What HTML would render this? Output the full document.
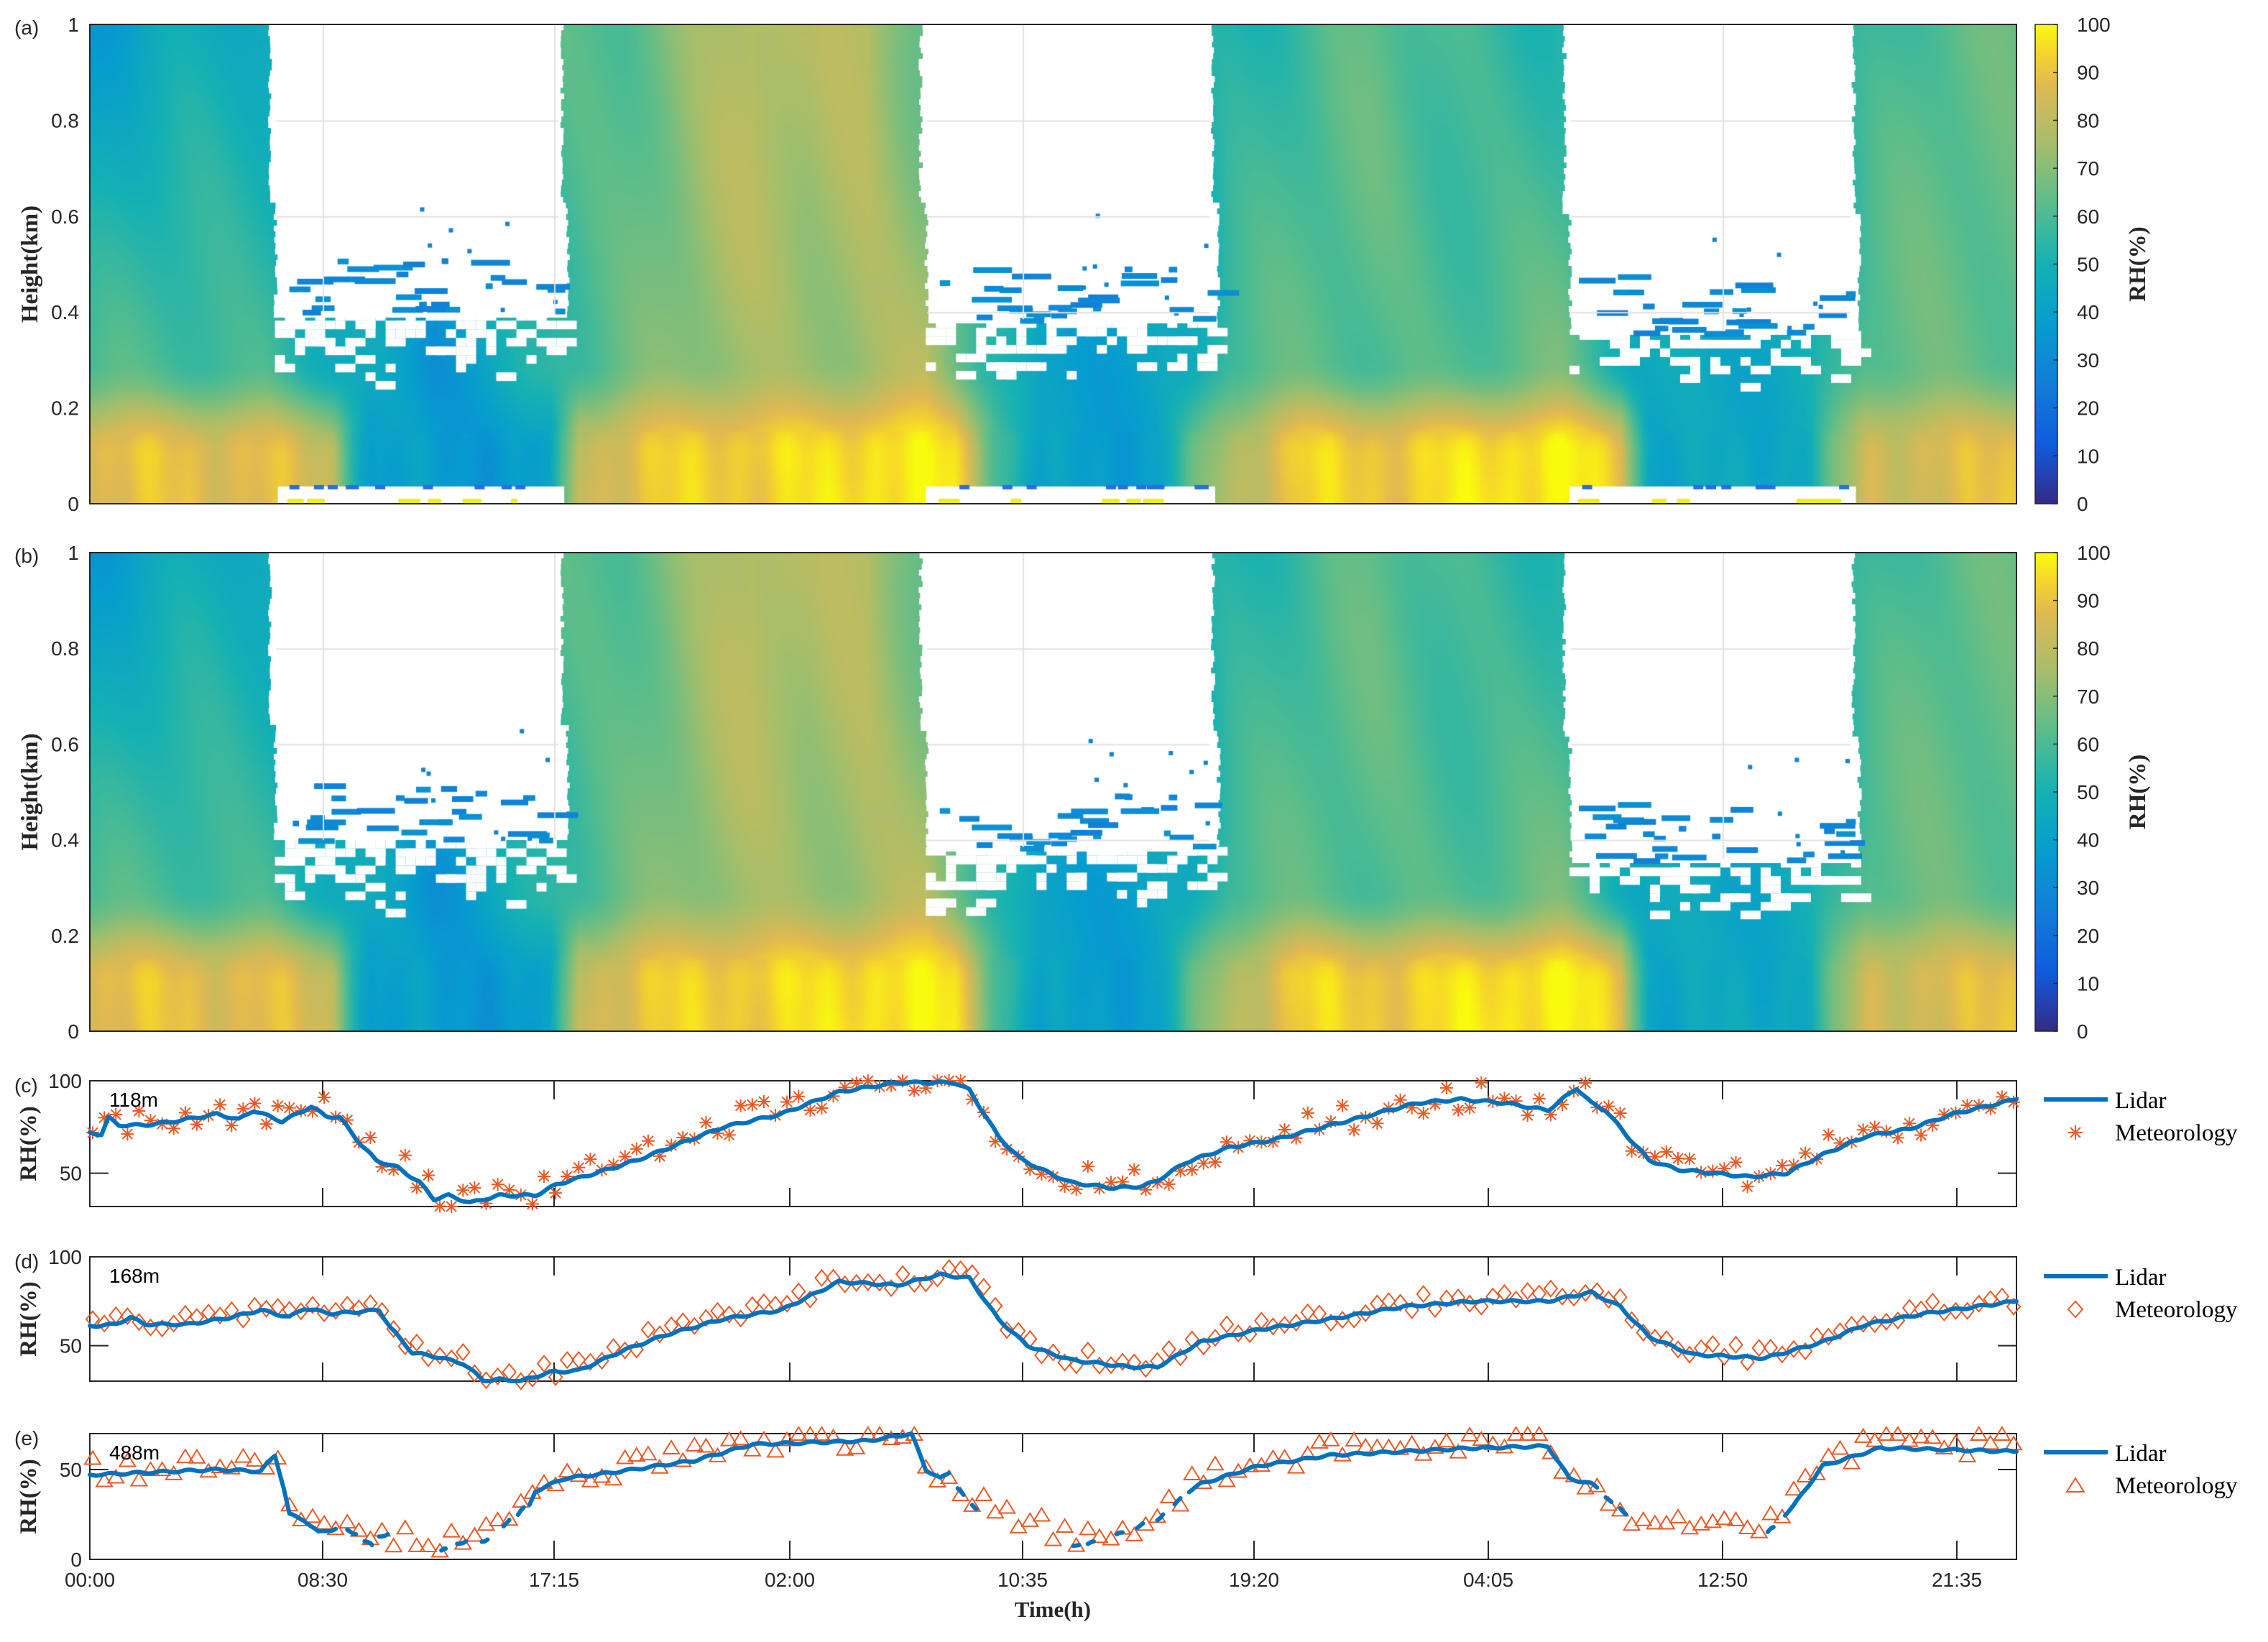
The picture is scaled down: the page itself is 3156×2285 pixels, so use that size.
<!DOCTYPE html>
<html><head><meta charset="utf-8">
<style>
html,body{margin:0;padding:0;background:#fff;}
body{width:3156px;height:2285px;position:relative;overflow:hidden;}
canvas{position:absolute;}
svg{position:absolute;left:0;top:0;}
</style></head>
<body>
<canvas id="ca" width="2681" height="667" style="left:125px;top:34px"></canvas>
<canvas id="cb" width="2681" height="666" style="left:125px;top:769px"></canvas>
<svg id="s" width="3156" height="2285" xmlns="http://www.w3.org/2000/svg" font-family="Liberation Sans, sans-serif">
<defs>
<linearGradient id="par" x1="0" y1="1" x2="0" y2="0">
<stop offset="0" stop-color="#352a87"/><stop offset="0.125" stop-color="#0f5cdd"/>
<stop offset="0.25" stop-color="#127dd8"/><stop offset="0.375" stop-color="#079ccf"/>
<stop offset="0.5" stop-color="#15b1b4"/><stop offset="0.625" stop-color="#59bd8c"/>
<stop offset="0.75" stop-color="#a5be6b"/><stop offset="0.875" stop-color="#e1b952"/>
<stop offset="0.94" stop-color="#f6d42c"/><stop offset="1" stop-color="#f9fb0e"/>
</linearGradient>
</defs>
<g id="g"></g>
</svg>
<script>
var NS="http://www.w3.org/2000/svg",G=document.getElementById('g');
function el(t,a,txt){var e=document.createElementNS(NS,t);for(var k in a)e.setAttribute(k,a[k]);if(txt!==undefined)e.textContent=txt;G.appendChild(e);return e;}
function X(ox){return 125+(ox-62)*(2681/1332);}
function interp(p,x){if(x<=p[0])return p[1];for(var i=2;i<p.length;i+=2){if(x<=p[i]){var t=(x-p[i-2])/(p[i]-p[i-2]);return p[i-1]+t*(p[i+1]-p[i-1]);}}return p[p.length-1];}
var seed=12345;function rnd(){seed=(seed*1103515245+12345)&0x7fffffff;return seed/0x7fffffff;}
var PS=[[53,42,135],[15,92,221],[18,125,216],[7,156,207],[21,177,180],[89,189,140],[165,190,107],[225,185,82],[246,212,44],[249,251,14]];
var PO=[0,.125,.25,.375,.5,.625,.75,.875,.94,1];
function par(v){v=Math.max(0,Math.min(1,v));for(var i=1;i<PO.length;i++){if(v<=PO[i]){var t=(v-PO[i-1])/(PO[i]-PO[i-1]);var a=PS[i-1],b=PS[i];return [a[0]+t*(b[0]-a[0]),a[1]+t*(b[1]-a[1]),a[2]+t*(b[2]-a[2])];}}return PS[9];}
var UP=[62,38,120,44,185,46,390,60,430,64,470,72,520,80,560,74,600,80,635,66,700,50,840,52,900,58,950,62,1000,58,1080,55,1283,55,1330,60,1394,63];
var LO=[62,86,120,90,185,90,230,80,255,36,380,40,400,84,500,93,600,99,660,94,690,60,720,40,800,42,840,72,900,92,1000,96,1080,97,1120,90,1140,45,1250,45,1290,82,1394,92];
var MI=[62,58,185,60,230,48,300,32,390,60,500,72,640,78,680,55,720,38,820,45,850,60,1080,64,1130,45,1250,46,1290,62,1394,66];
function rh(ox,h){var lo=interp(LO,ox),mi=interp(MI,ox),up=interp(UP,ox);
 lo+=2*Math.sin(ox*0.2)*(h<0.15?1:0);
 var v;if(h<0.1)v=lo;else if(h<0.3){var t=(h-0.1)/0.2;t=t*t*(3-2*t);v=lo+(mi-lo)*t;}else{var t=(h-0.3)/0.7;v=mi+(up-mi)*t;}
 v+=3*Math.sin(ox*0.07+h*6)+2*Math.sin(ox*0.031-h*3);return v;}
function heat(id,strip){
 var c=document.getElementById(id),ctx=c.getContext('2d'),W=c.width,H=c.height;
 var sw=333,sh=100,o=document.createElement('canvas');o.width=sw;o.height=sh;var oc=o.getContext('2d');
 var img=oc.createImageData(sw,sh);
 for(var j=0;j<sh;j++)for(var i=0;i<sw;i++){var ox=62+(i+0.5)/sw*1332,h=1-(j+0.5)/sh;var col=par(rh(ox,h)/100);var k=(j*sw+i)*4;img.data[k]=col[0];img.data[k+1]=col[1];img.data[k+2]=col[2];img.data[k+3]=255;}
 oc.putImageData(img,0,0);ctx.imageSmoothingEnabled=true;ctx.drawImage(o,0,0,W,H);
 var gaps=[[185,390,0.40,192],[635,840,0.385,640],[1080,1283,0.36,1085]];
 seed=777;
 gaps.forEach(function(g){var x0=X(g[0])-125,x1=X(g[1])-125,yb=(1-g[2])*H;
  ctx.fillStyle='#fff';
  for(var y=0;y<yb;y+=8){var j1=rnd()*6,j2=rnd()*6;ctx.fillRect(x0+j1+(y>yb*0.6?8:0),y,x1-x0-j1-j2,8);}
  for(var y=yb;y<(1-0.24)*H;y+=12){var frac=(y-yb)/((1-0.24)*H-yb);
   for(var x=x0+10;x<x1-6;x+=14){if(rnd()>0.45+frac*0.55){ctx.fillRect(x,y,rnd()<0.5?14:28,12);}}}
  for(var n=0;n<28;n++){var y=yb-rnd()*0.12*H,x=x0+20+rnd()*(x1-x0-30);var col=par(0.26+rnd()*0.08);ctx.fillStyle='rgb('+col.map(Math.round).join(',')+')';ctx.fillRect(x,y,8+rnd()*50,8);}
  for(var n=0;n<8;n++){var y=yb-0.25*H*rnd(),x=x0+(x1-x0)*(0.5+rnd()*0.5);var col=par(0.28);ctx.fillStyle='rgb('+col.map(Math.round).join(',')+')';ctx.fillRect(x,y,6,6);}
  ctx.fillStyle='#e2e2e2';
  [449,771,1099,1423,1745,2071,2397,2723].forEach(function(gx){var lx=gx-125;if(lx>x0+4&&lx<x1-4)ctx.fillRect(lx,0,2,yb);});
  [0.2,0.4,0.6,0.8].forEach(function(hh){var ly=(1-hh)*H;if(ly<yb-2)ctx.fillRect(x0+12,ly,x1-x0-20,2);});
  if(strip){ctx.fillStyle='#fff';var xs=X(g[3])-125;ctx.fillRect(xs,H-24,x1-xs,24);
   ctx.fillStyle='#f3ee10';for(var n=0;n<10;n++){ctx.fillRect(xs+rnd()*(x1-xs-20),H-7,8+rnd()*16,7);}
   ctx.fillStyle='rgb(40,110,230)';for(var n=0;n<10;n++){ctx.fillRect(xs+rnd()*(x1-xs-20),H-26,14,6);}}
 });
}
heat('ca',true);heat('cb',false);

var TX=[449,771,1099,1423,1745,2071,2397,2723],TL=['00:00','08:30','17:15','02:00','10:35','19:20','04:05','12:50','21:35'];
[[34,667,'(a)'],[769,666,'(b)']].forEach(function(p){var t=p[0],h=p[1];
 el('rect',{x:125,y:t,width:2681,height:h,fill:'none',stroke:'#262626','stroke-width':2});
 for(var i=0;i<=5;i++){var y=t+h-h*i/5;el('text',{x:110,y:y+10,'font-size':28,'text-anchor':'end',fill:'#262626'},i==0?'0':i==5?'1':(i/5).toFixed(1));}
 el('text',{x:20,y:t+14,'font-size':28,fill:'#262626'},p[2]);
 el('text',{transform:'translate(52,'+(t+h/2)+') rotate(-90)','font-size':33,'font-weight':'bold','font-family':'Liberation Serif, serif','text-anchor':'middle',fill:'#262626'},'Height(km)');
 el('rect',{x:2832,y:t,width:31,height:h,fill:'url(#par)',stroke:'#262626','stroke-width':1.5});
 for(var i=0;i<=10;i++){var y=t+h-h*i/10;el('line',{x1:2857,x2:2863,y1:y,y2:y,stroke:'#262626','stroke-width':1.5});el('text',{x:2890,y:y+10,'font-size':28,fill:'#262626'},String(i*10));}
 el('text',{transform:'translate(2985,'+(t+h/2)+') rotate(-90)','font-size':33,'font-weight':'bold','font-family':'Liberation Serif, serif','text-anchor':'middle',fill:'#262626'},'RH(%)');
});
var panels=[
 {t:1504,b:1679,vmax:100,vmin:32,ticks:[[50,'50'],[100,'100']],lab:'(c)',h:'118m',mk:'star',
  L:[62,72,70,71,75,80,82,76,100,76,120,78,150,82,165,79,175,84,195,78,215,86,225,81,235,80,250,65,260,57,275,53,290,45,300,36,310,38,325,34,345,38,370,38,385,44,420,52,440,57,470,66,500,75,540,82,580,94,620,99,660,99,670,95,690,70,705,58,720,52,740,45,770,42,790,43,800,46,820,56,850,64,880,68,910,74,950,82,980,88,1010,90,1040,88,1070,84,1090,96,1100,88,1110,84,1125,70,1140,57,1160,52,1185,50,1210,48,1235,50,1260,60,1290,70,1320,74,1350,82,1394,90]},
 {t:1749,b:1922,vmax:100,vmin:30,ticks:[[50,'50'],[100,'100']],lab:'(d)',h:'168m',mk:'dia',
  L:[62,61,80,62,90,66,100,62,130,62,160,66,180,70,200,66,210,71,230,68,262,70,270,60,285,46,300,44,320,40,335,30,345,31,360,30,380,35,400,36,430,47,460,56,500,65,540,70,580,86,620,84,650,90,670,88,690,65,710,50,740,42,780,38,800,38,830,52,870,59,920,65,970,72,1020,75,1070,75,1100,80,1120,72,1140,55,1170,45,1220,43,1260,52,1290,62,1330,68,1394,75]},
 {t:1995,b:2170,vmax:70,vmin:0,ticks:[[0,'0'],[50,'50']],lab:'(e)',h:'488m',mk:'tri',
  L:[62,47,150,50,180,49,190,58,196,40,200,25,210,22,220,15,232,17,236,null,
     240,16,246,14,null,null,252,10,257,8,null,null,262,13,268,14,null,null,
     305,5,308,6,null,null,316,9,322,10,null,null,333,10,337,11,null,null,348,18,352,22,null,null,
     358,25,362,29,null,null,366,30,370,38,390,45,420,48,480,55,520,64,560,65,600,66,630,70,640,50,650,45,656,48,null,null,
     662,40,666,36,null,null,672,30,675,28,null,null,
     742,7,746,8,null,null,752,9,756,10,null,null,772,14,776,15,null,null,786,18,790,20,null,null,800,22,804,25,null,null,
     812,30,816,34,null,null,822,38,830,42,870,52,920,58,970,60,1020,62,1070,63,1085,45,1100,42,1104,40,null,null,1110,35,1114,32,null,null,1120,28,1124,25,null,null,
     1222,15,1226,18,null,null,1234,25,1240,30,1260,52,1300,62,1394,60]}
];
panels.forEach(function(P,pi){var t=P.t,b=P.b,hgt=b-t;
 function Y(v){return b-(v-P.vmin)/(P.vmax-P.vmin)*hgt;}
 el('rect',{x:125,y:t,width:2681,height:hgt,fill:'none',stroke:'#262626','stroke-width':2});
 TX.forEach(function(x){el('line',{x1:x,x2:x,y1:t,y2:t+26,stroke:'#262626','stroke-width':2});el('line',{x1:x,x2:x,y1:b,y2:b-26,stroke:'#262626','stroke-width':2});});
 P.ticks.forEach(function(k){var y=Y(k[0]);el('line',{x1:125,x2:151,y1:y,y2:y,stroke:'#262626','stroke-width':2});el('line',{x1:2806,x2:2780,y1:y,y2:y,stroke:'#262626','stroke-width':2});el('text',{x:114,y:y+10,'font-size':28,'text-anchor':'end',fill:'#262626'},k[1]);});
 el('text',{x:20,y:t+16,'font-size':28,fill:'#262626'},P.lab);
 el('text',{transform:'translate(50,'+(t+hgt/2)+') rotate(-90)','font-size':33,'font-weight':'bold','font-family':'Liberation Serif, serif','text-anchor':'middle',fill:'#262626'},'RH(%)');
 // clean data for interpolation
 var clean=[];for(var i=0;i<P.L.length;i+=2){if(P.L[i]!==null&&P.L[i+1]!==null){clean.push(P.L[i],P.L[i+1]);}}
 seed=100+pi*57;var g=el('g',{stroke:'#ea5a25',fill:'none','stroke-width':2});
 for(var ox=64;ox<1394;ox+=8){var base=interp(clean,ox);
  if(pi==2){if(ox>236&&ox<310)base=14-(ox-236)*0.12; if(ox>675&&ox<742)base=32-(ox-675)*0.35; if(ox>1124&&ox<1222)base=22-(ox-1124)*0.06;}
  var v=base+(rnd()-0.5)*(pi==0?16:pi==1?10:14)+(pi==0?2:pi==2?3:2);
  v=Math.max(P.vmin,Math.min(P.vmax,v));var cx=X(ox),cy=Y(v);
  var e=document.createElementNS(NS,'path');
  if(P.mk=='star'){var r=9;e.setAttribute('d','M'+(cx-r)+' '+cy+'H'+(cx+r)+'M'+cx+' '+(cy-r)+'V'+(cy+r)+'M'+(cx-7)+' '+(cy-7)+'L'+(cx+7)+' '+(cy+7)+'M'+(cx-7)+' '+(cy+7)+'L'+(cx+7)+' '+(cy-7));}
  else if(P.mk=='dia'){e.setAttribute('d','M'+cx+' '+(cy-11)+'L'+(cx+9)+' '+cy+'L'+cx+' '+(cy+11)+'L'+(cx-9)+' '+cy+'Z');}
  else{e.setAttribute('d','M'+cx+' '+(cy-9)+'L'+(cx+11)+' '+(cy+9)+'L'+(cx-11)+' '+(cy+9)+'Z');}
  g.appendChild(e);
 }
 var segs=[],cur=[];var L=P.L;
 for(var i=0;i<L.length;i+=2){if(L[i]===null||L[i+1]===null){if(cur.length)segs.push(cur);cur=[];continue;}cur.push([L[i],L[i+1]]);}
 if(cur.length)segs.push(cur);
 segs.forEach(function(s){var pts=[];for(var j=0;j<s.length-1;j++){var a=s[j],c=s[j+1];for(var ox=a[0];ox<c[0];ox+=2){var tt=(ox-a[0])/(c[0]-a[0]);var v=a[1]+tt*(c[1]-a[1])+0.6*Math.sin(ox*0.35);v=Math.max(P.vmin,Math.min(P.vmax,v));pts.push(X(ox).toFixed(1)+','+Y(v).toFixed(1));}}
  var last=s[s.length-1];pts.push(X(last[0]).toFixed(1)+','+Y(Math.max(P.vmin,Math.min(P.vmax,last[1]))).toFixed(1));
  el('polyline',{points:pts.join(' '),fill:'none',stroke:'#0072bd','stroke-width':6,'stroke-linejoin':'round','stroke-linecap':'round'});});
 el('text',{x:152,y:t+36,'font-size':28,fill:'#000'},P.h);
 var ly=[1530,1776,2021][pi];
 el('line',{x1:2844,x2:2933,y1:ly,y2:ly,stroke:'#0072bd','stroke-width':6});
 el('text',{x:2943,y:ly+12,'font-size':33,'font-family':'Liberation Serif, serif',fill:'#000'},'Lidar');
 el('text',{x:2943,y:ly+57,'font-size':33,'font-family':'Liberation Serif, serif',fill:'#000'},'Meteorology');
 var mx=2888,my=ly+46;var gg=el('g',{stroke:'#ea5a25',fill:'none','stroke-width':2});
 var d=P.mk=='star'?'M'+(mx-10)+' '+my+'H'+(mx+10)+'M'+mx+' '+(my-10)+'V'+(my+10)+'M'+(mx-7)+' '+(my-7)+'L'+(mx+7)+' '+(my+7)+'M'+(mx-7)+' '+(my+7)+'L'+(mx+7)+' '+(my-7):P.mk=='dia'?'M'+mx+' '+(my-11)+'L'+(mx+10)+' '+my+'L'+mx+' '+(my+11)+'L'+(mx-10)+' '+my+'Z':'M'+mx+' '+(my-10)+'L'+(mx+12)+' '+(my+9)+'L'+(mx-12)+' '+(my+9)+'Z';
 var e=document.createElementNS(NS,'path');e.setAttribute('d',d);gg.appendChild(e);
});
[125].concat(TX).forEach(function(x,i){el('text',{x:x,y:2208,'font-size':28,'text-anchor':'middle',fill:'#262626'},TL[i]);});
el('text',{x:1465,y:2250,'font-size':31,'font-weight':'bold','font-family':'Liberation Serif, serif','text-anchor':'middle',fill:'#262626'},'Time(h)');
</script>
</body></html>
